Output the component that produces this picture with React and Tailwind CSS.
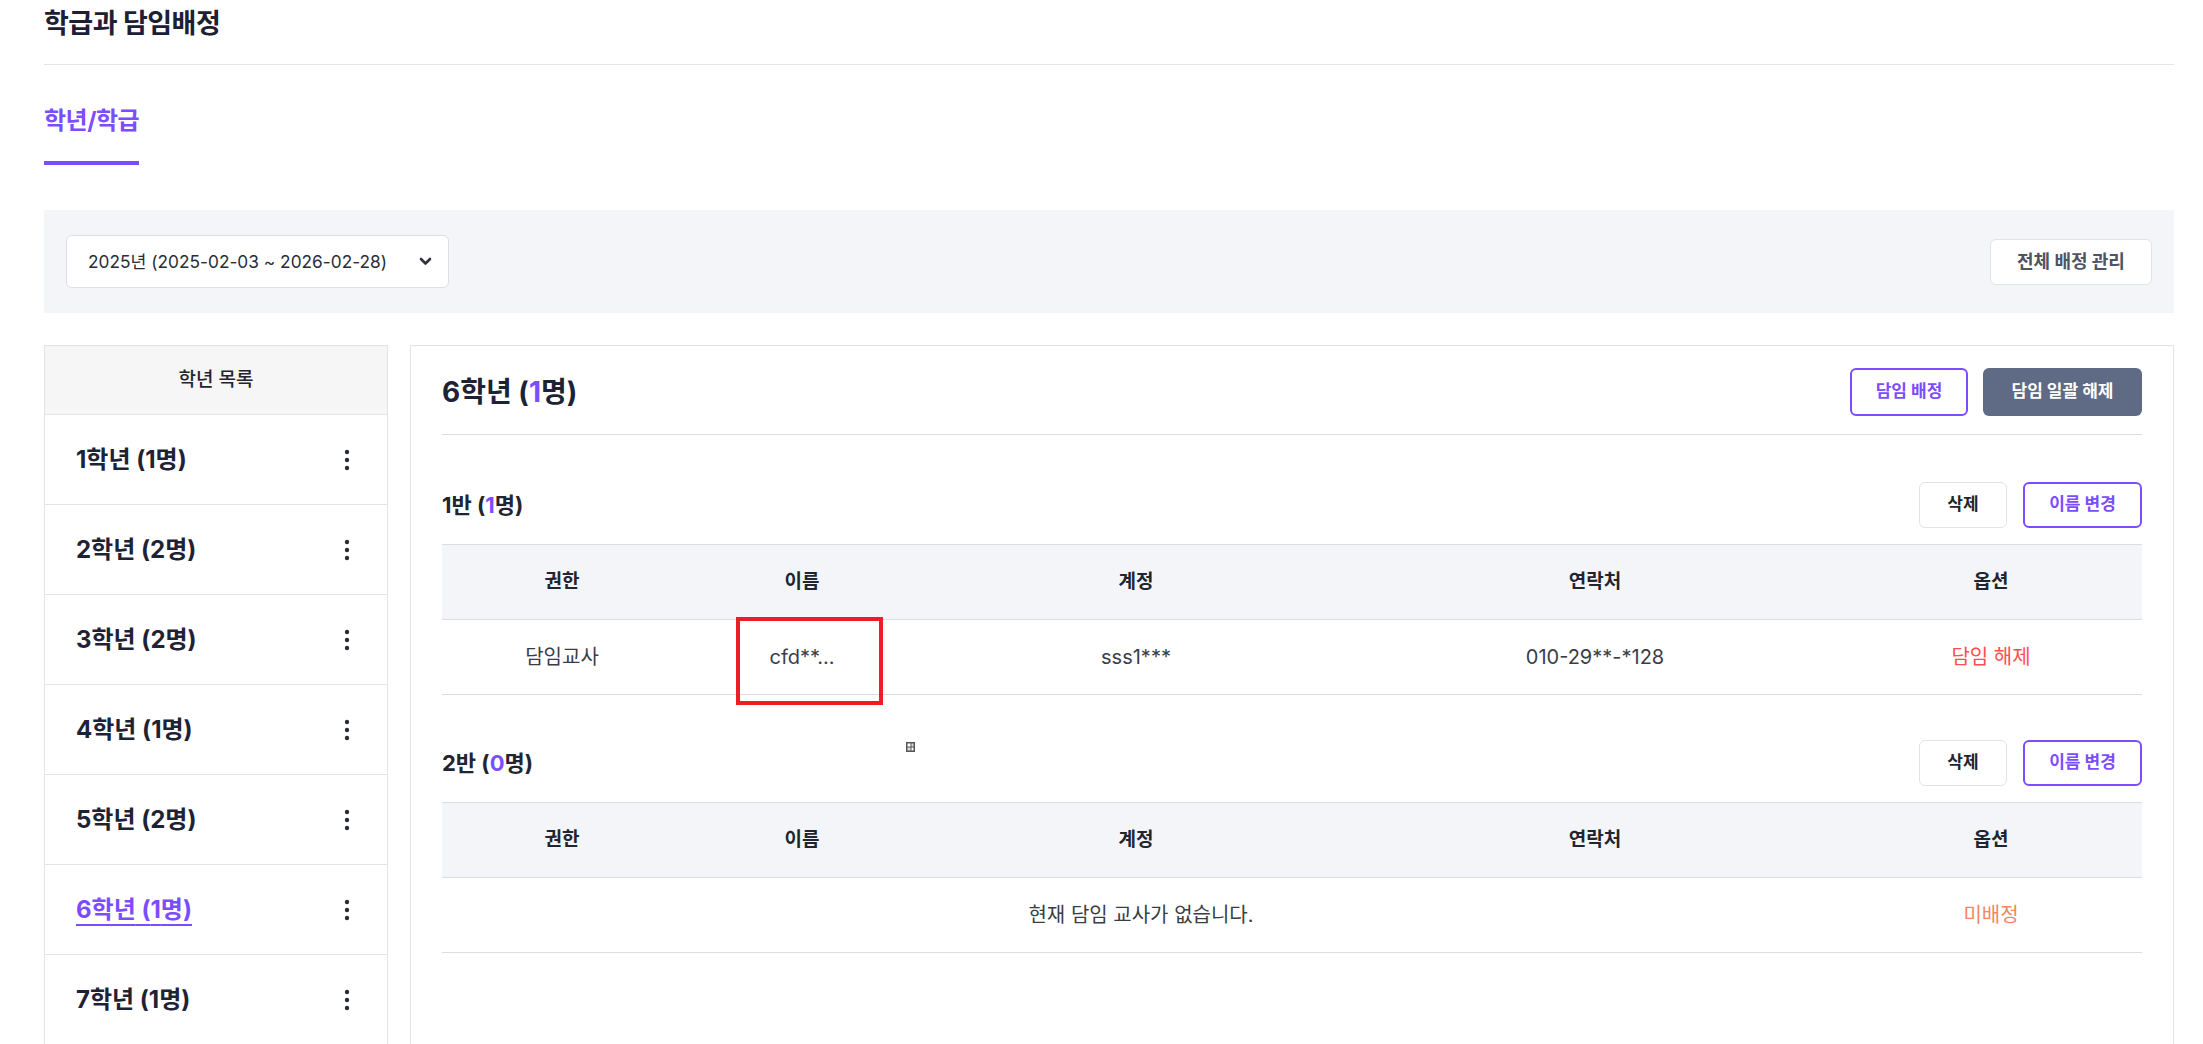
import React from 'react';

const font = "font-['Inter','Noto_Sans_CJK_KR','Noto_Sans',sans-serif]";

const grades = [
  { name: '1학년', count: 1 },
  { name: '2학년', count: 2 },
  { name: '3학년', count: 2 },
  { name: '4학년', count: 1 },
  { name: '5학년', count: 2 },
  { name: '6학년', count: 1, active: true },
  { name: '7학년', count: 1 },
];

const DotsIcon = () => (
  <svg width="8" height="24" viewBox="0 0 8 24" fill="#2b2d36">
    <circle cx="4" cy="4" r="2.2" />
    <circle cx="4" cy="12" r="2.2" />
    <circle cx="4" cy="20" r="2.2" />
  </svg>
);

const Chevron = () => (
  <svg width="13" height="9" viewBox="0 0 13 9" fill="none">
    <path d="M2 2l4.5 4.5L11 2" stroke="#2f3340" strokeWidth="2.6" strokeLinecap="round" strokeLinejoin="round" />
  </svg>
);

const cols = 'grid grid-cols-[240px_240px_428px_1fr_302px]';

const TableHead = () => (
  <div className={`${cols} h-[76px] items-center bg-[#f4f5f9] border-y border-[#dcdde1] text-[19px] font-bold text-[#22252f]`}>
    <div className="text-center">권한</div>
    <div className="text-center">이름</div>
    <div className="text-center">계정</div>
    <div className="text-center">연락처</div>
    <div className="text-center">옵션</div>
  </div>
);

const SectionTop = ({ label, count, children }) => (
  <div className="relative flex items-center justify-between h-[46px]">
    <div className="text-[22px] font-bold text-[#22252f]">
      {label} (<span className="text-[#7c4dff]">{count}</span>명)
    </div>
    {children}
    <div className="flex items-center gap-[16px]">
      <button className="w-[88px] h-[46px] rounded-[6px] border border-[#e2e3e6] bg-white text-[17px] font-bold text-[#22252f]">
        삭제
      </button>
      <button className="w-[119px] h-[46px] rounded-[6px] border-2 border-[#7c4dff] bg-white text-[17px] font-bold text-[#7c4dff]">
        이름 변경
      </button>
    </div>
  </div>
);

export default function App() {
  return (
    <div className={`${font} bg-white min-h-screen pl-[44px] pr-[29px] text-[#1e2235] overflow-hidden h-[1044px]`}>
      {/* page title */}
      <div className="pt-[6px] pb-[22px] border-b border-[#e4e4e7]">
        <h1 className="text-[27px] leading-[36px] font-bold tracking-[-0.5px] text-[#1d2033]">학급과 담임배정</h1>
      </div>

      {/* tabs */}
      <div className="flex">
        <div className="pt-[40px] pb-[24px] border-b-[4px] border-[#7c4dff] text-[24px] leading-[32px] font-bold tracking-[-0.5px] text-[#7c4dff]">
          학년/학급
        </div>
      </div>

      {/* filter bar */}
      <div className="mt-[45px] h-[103px] bg-[#f4f5f9] flex items-center justify-between px-[22px]">
        <div className="w-[383px] h-[53px] rounded-[6px] border border-[#dedfe3] bg-white flex items-center justify-between pl-[21px] pr-[16px]">
          <span className="text-[17.3px] text-[#2b2d36]">2025년 (2025-02-03 ~ 2026-02-28)</span>
          <Chevron />
        </div>
        <button className="w-[162px] h-[46px] rounded-[6px] border border-[#e2e3e6] bg-white text-[18px] font-bold text-[#4d5463]">
          전체 배정 관리
        </button>
      </div>

      <div className="mt-[32px] flex gap-[22px]">
        {/* grade list */}
        <div className="w-[344px] shrink-0 border border-[#e3e3e3]">
          <div className="h-[68px] bg-[#f6f6f6] flex items-center justify-center text-[19px] font-medium text-[#22252f]">
            학년 목록
          </div>
          {grades.map((g) => (
            <div key={g.name} className="h-[90px] border-t border-[#e5e5e5] flex items-center justify-between pl-[31px] pr-[36px]">
              <span
                className={
                  g.active
                    ? 'text-[24px] font-bold text-[#7c4dff] underline decoration-2 underline-offset-[6px]'
                    : 'text-[24px] font-bold text-[#1e2235]'
                }
              >
                {g.name} ({g.count}명)
              </span>
              <DotsIcon />
            </div>
          ))}
        </div>

        {/* class detail */}
        <div className="flex-1 border border-[#e3e3e3] px-[31px] min-h-[760px]">
          <div className="mt-[22px] pb-[18px] border-b border-[#dcdde1] flex items-center justify-between">
            <div className="text-[28px] font-bold text-[#1e2235]">
              6학년 (<span className="text-[#7c4dff]">1</span>명)
            </div>
            <div className="flex items-center gap-[15px]">
              <button className="w-[118px] h-[48px] rounded-[6px] border-2 border-[#7c4dff] bg-white text-[17px] font-bold text-[#7c4dff]">
                담임 배정
              </button>
              <button className="w-[159px] h-[48px] rounded-[6px] bg-[#5f6a84] text-[17px] font-bold text-white">
                담임 일괄 해제
              </button>
            </div>
          </div>

          {/* 1반 */}
          <div className="mt-[47px]">
            <SectionTop label="1반" count={1} />
            <div className="mt-[16px]">
              <TableHead />
              <div className={`${cols} relative h-[75px] items-center border-b border-[#dcdde1] text-[20px] text-[#3a3d46]`}>
                <div className="text-center">담임교사</div>
                <div className="text-center">cfd**...</div>
                <div className="text-center">sss1***</div>
                <div className="text-center">010-29**-*128</div>
                <div className="text-center text-[#ff4d4f]">담임 해제</div>
                <div className="absolute left-[294px] top-[-3px] w-[147px] h-[88px] border-[4px] border-[#ee1c25]" />
              </div>
            </div>
          </div>

          {/* 2반 */}
          <div className="mt-[45px]">
            <SectionTop label="2반" count={0}>
              <svg className="absolute left-[464px] top-[2px]" width="9" height="10" viewBox="0 0 9 10">
                <rect x="0" y="0" width="9" height="10" fill="#555" />
                <rect x="1.5" y="1.5" width="3" height="3" fill="#fff" />
                <rect x="5.5" y="1.5" width="2" height="3" fill="#ddd" />
                <rect x="1.5" y="5.5" width="3" height="3" fill="#ddd" />
                <rect x="5.5" y="5.5" width="2" height="3" fill="#fff" />
              </svg>
            </SectionTop>
            <div className="mt-[16px]">
              <TableHead />
              <div className={`${cols} h-[75px] items-center border-b border-[#dcdde1] text-[20px] text-[#3a3d46]`}>
                <div className="col-span-4 text-center">현재 담임 교사가 없습니다.</div>
                <div className="text-center text-[#f7855f]">미배정</div>
              </div>
            </div>
          </div>
        </div>
      </div>
    </div>
  );
}
